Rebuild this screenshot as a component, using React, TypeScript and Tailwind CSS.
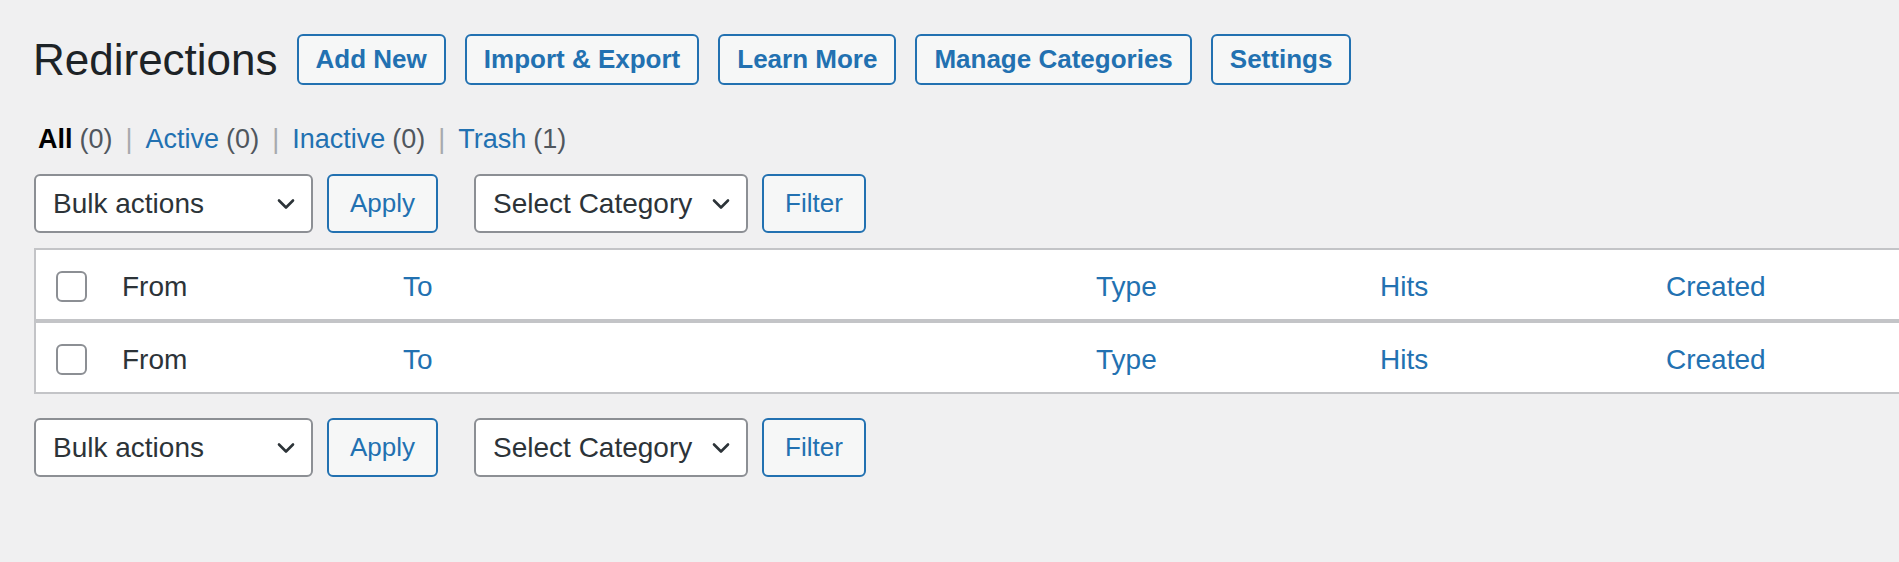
import React from 'react'

const Chevron = () => (
    <svg width="20" height="12" viewBox="0 0 20 12" fill="none" className="shrink-0">
        <path d="M3 2.5 L10 9.5 L17 2.5" stroke="#2c3338" strokeWidth="2.6" strokeLinecap="round" strokeLinejoin="round" />
    </svg>
)

const Select = ({ label, width }: { label: string; width: string }) => (
    <div className={`${width} h-[59px] flex items-center justify-between pl-[17px] pr-[15px] bg-white border-2 border-[#8c8f94] rounded-[6px] text-[28px] text-[#2c3338]`}>
        <span className="whitespace-nowrap">{label}</span>
        <Chevron />
    </div>
)

const Button = ({ children, className = '' }: { children: React.ReactNode; className?: string }) => (
    <button className={`h-[59px] flex items-center bg-[#f6f7f7] border-2 border-[#2271b1] rounded-[6px] text-[26px] text-[#2271b1] whitespace-nowrap ${className}`}>
        {children}
    </button>
)

const Toolbar = ({ className = '' }: { className?: string }) => (
    <div className={`flex items-center ${className}`}>
        <Select label="Bulk actions" width="w-[279px]" />
        <Button className="ml-[14px] px-[21px]">Apply</Button>
        <Select label="Select Category" width="w-[274px] ml-[36px]" />
        <Button className="ml-[14px] px-[21px]">Filter</Button>
    </div>
)

const Checkbox = () => (
    <div className="w-[31px] h-[31px] bg-white border-2 border-[#8c8f94] rounded-[6px]" />
)

const HeaderRow = ({ className = '' }: { className?: string }) => (
    <div className={`h-[71px] flex items-center pt-[4px] text-[28px] ${className}`}>
        <div className="w-[86px] pl-[20px] flex items-center">
            <Checkbox />
        </div>
        <div className="w-[281px] text-[#2c3338]">From</div>
        <div className="w-[693px] text-[#2271b1]">To</div>
        <div className="w-[284px] text-[#2271b1]">Type</div>
        <div className="w-[286px] text-[#2271b1]">Hits</div>
        <div className="flex-1 text-[#2271b1]">Created</div>
    </div>
)

const titleActions = ['Add New', 'Import & Export', 'Learn More', 'Manage Categories', 'Settings']

const filters = [
    { label: 'All', count: 0, current: true },
    { label: 'Active', count: 0 },
    { label: 'Inactive', count: 0 },
    { label: 'Trash', count: 1 },
]

export default function App() {
    return (
        <div className="w-screen h-[562px] overflow-hidden bg-[#f0f0f1] font-['Liberation_Sans',Arial,sans-serif]">
            <div className="pl-[34px] pt-[34px]">
                {/* page title + actions */}
                <div className="flex items-center">
                    <h1 className="text-[44px] leading-none text-[#1d2327] -ml-[1px] mr-[19px]">Redirections</h1>
                    <div className="flex gap-[19px]">
                        {titleActions.map((t) => (
                            <button
                                key={t}
                                className="h-[51px] px-[17px] bg-[#f6f7f7] border-2 border-[#2271b1] rounded-[6px] text-[26px] font-semibold text-[#2271b1] whitespace-nowrap"
                            >
                                {t}
                            </button>
                        ))}
                    </div>
                </div>

                {/* status links */}
                <div className="mt-[35px] flex items-center text-[27px] leading-[38px] ml-[4px]">
                    {filters.map((f, i) => (
                        <React.Fragment key={f.label}>
                            {i > 0 && <span className="px-[13px] text-[#a7aaad]">|</span>}
                            <a className={f.current ? 'font-semibold text-black' : 'text-[#2271b1]'}>{f.label}</a>
                            <span className="text-[#50575e] ml-[7px]">({f.count})</span>
                        </React.Fragment>
                    ))}
                </div>

                <Toolbar className="mt-[16px]" />

                {/* list table */}
                <div className="mt-[15px] w-[1900px] bg-white border-2 border-r-0 border-[#c3c4c7]">
                    <HeaderRow className="border-b-2 border-[#c3c4c7]" />
                    <HeaderRow className="border-t-2 border-[#c3c4c7]" />
                </div>

                <Toolbar className="mt-[24px]" />
            </div>
        </div>
    )
}
